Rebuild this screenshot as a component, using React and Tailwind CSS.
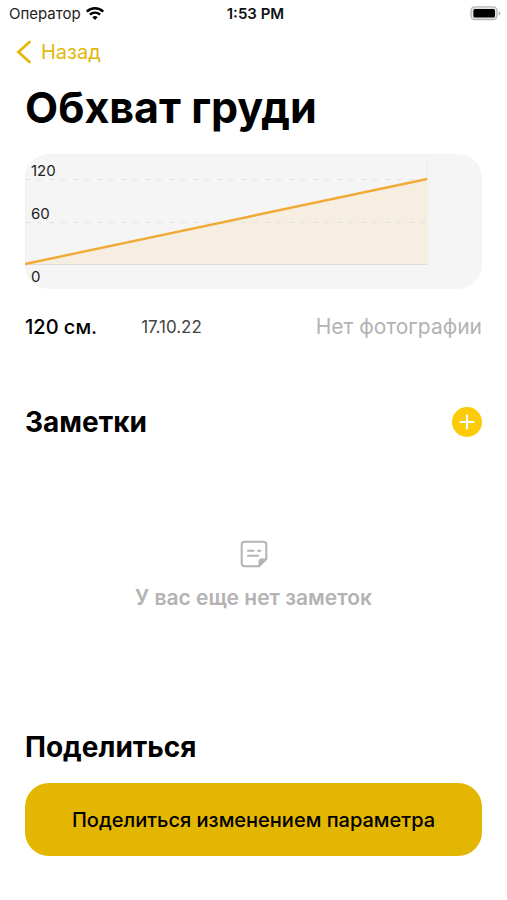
const marks = [
  { value: 120, lineY: 25, textY: 22 },
  { value: 60, lineY: 68, textY: 65 },
  { value: 0, lineY: 110, textY: 128 },
];

const StatusBar = () => (
  <div className="grid grid-cols-3 items-center h-7 pl-[9px] pr-[5px] text-[15px] text-[#222]">
    <div className="flex items-center gap-1">
      <span>Оператор</span>
      <svg className="w-5 h-4" viewBox="0 0 20 16" aria-hidden="true">
        <path d="M10 14 7.3 11.2a3.9 3.9 0 0 1 5.4 0Z" fill="#000" />
        <path
          d="M4.9 8.7a7.3 7.3 0 0 1 10.2 0M1.8 5.6a11.6 11.6 0 0 1 16.4 0"
          fill="none"
          stroke="#000"
          strokeWidth="2.4"
        />
      </svg>
    </div>
    <span className="text-center font-semibold text-[#111]">1:53 PM</span>
    <svg className="w-8 h-4 justify-self-end" viewBox="0 0 32 16" aria-hidden="true">
      <rect x="1" y="0.9" width="26" height="12.6" rx="3.8" fill="#e4e4e4" stroke="#b8b8b8" strokeWidth="1.4" />
      <rect x="3.4" y="3" width="21.6" height="8.6" rx="1.6" fill="#000" />
      <path d="M28.7 5.2c2.4.8 2.4 3.4 0 4.2Z" fill="#b5b5b5" />
    </svg>
  </div>
);

const Chart = () => (
  <div className="rounded-3xl bg-[#f5f5f5] overflow-hidden">
    <svg className="block w-full h-[135px]" role="img" aria-label="Обхват груди">
      {/* Рамка области графика */}
      <rect x="0" y="0" width="88%" height="110" fill="none" stroke="#eeeeee" />

      {/* Заливка под линией */}
      <svg width="88%" height="110" viewBox="0 0 100 110" preserveAspectRatio="none">
        <path d="M0 110 100 25V110Z" fill="#f5eee1" />
      </svg>

      {/* Сетка */}
      {marks.map((mark) => (
        <line
          key={mark.value}
          x1="0"
          x2="88%"
          y1={mark.lineY + 0.5}
          y2={mark.lineY + 0.5}
          stroke={mark.value === 0 ? "#dcdcd9" : "#e2e2e0"}
          strokeDasharray={mark.value === 0 ? undefined : "5 7"}
        />
      ))}

      <line x1="0" y1="110" x2="88%" y2="25" stroke="#f0aa35" strokeWidth="2.4" />

      {marks.map((mark) => (
        <text key={mark.value} x="6" y={mark.textY} fontSize="15" fill="#222">
          {mark.value}
        </text>
      ))}
    </svg>
  </div>
);

const NoteIcon = () => (
  <svg className="w-7 h-7" viewBox="0 0 28 28" fill="none" stroke="#b3b3b3" strokeWidth="2" aria-hidden="true">
    <path
      d="M19 26.3H4.7a3 3 0 0 1-3-3V4.7a3 3 0 0 1 3-3h18.6a3 3 0 0 1 3 3V19Z"
      strokeLinejoin="round"
    />
    <path d="M19 26.3V21a2 2 0 0 1 2-2h5.3Z" fill="#b3b3b3" strokeWidth="1" />
    <path d="M8 10.8h5.5M18 10.8h2.5M8 15.7h10" strokeLinecap="round" />
  </svg>
);

const App = () => {
  return (
    <div className="min-h-screen bg-white text-black font-['Inter','Liberation_Sans',sans-serif]">
      <StatusBar />

      <nav className="flex items-center h-12 px-4">
        <a href="#" className="flex items-center gap-[9px] text-xl text-[#e3b80c]">
          <svg className="w-4 h-6" viewBox="0 0 16 24" fill="none" aria-hidden="true">
            <path d="M13.5 2 2.5 12l11 10" stroke="currentColor" strokeWidth="2.8" strokeLinecap="round" />
          </svg>
          Назад
        </a>
      </nav>

      <main className="px-[25px]">
        <h1 className="pt-1 pb-5 text-[43px] leading-[54px] font-bold">Обхват груди</h1>

        <Chart />

        <div className="flex items-center pt-6 text-xl">
          <span className="font-medium">120 см.</span>
          <time dateTime="2022-10-17" className="ml-11 text-[17px] leading-6 text-[#444]">17.10.22</time>
          <span className="ml-auto text-[21px] leading-7 text-[#b3b3b3]">Нет фотографии</span>
        </div>

        <section className="pt-[63px]">
          <div className="flex items-center justify-between">
            <h2 className="text-[28px] leading-9 font-bold">Заметки</h2>
            <button
              type="button"
              aria-label="Добавить заметку"
              className="flex items-center justify-center w-[30px] h-[30px] rounded-full bg-[#fccb08]"
            >
              <svg className="w-4 h-4" viewBox="0 0 16 16" aria-hidden="true">
                <path d="M8 1.5v13M1.5 8h13" stroke="#fff" strokeWidth="2.2" strokeLinecap="round" />
              </svg>
            </button>
          </div>

          {/* Пустой список */}
          <div className="flex flex-col items-center gap-4 pt-[100px] pb-[117px]">
            <NoteIcon />
            <p className="text-[21px] leading-7 font-semibold text-[#b3b3b3]">У вас еще нет заметок</p>
          </div>
        </section>

        <section className="pb-11">
          <h2 className="text-[28px] leading-9 font-bold">Поделиться</h2>
          <button
            type="button"
            className="w-full h-[73px] mt-[18px] rounded-3xl bg-[#e3b602] text-xl font-medium"
          >
            Поделиться изменением параметра
          </button>
        </section>
      </main>
    </div>
  );
};

export default App;
